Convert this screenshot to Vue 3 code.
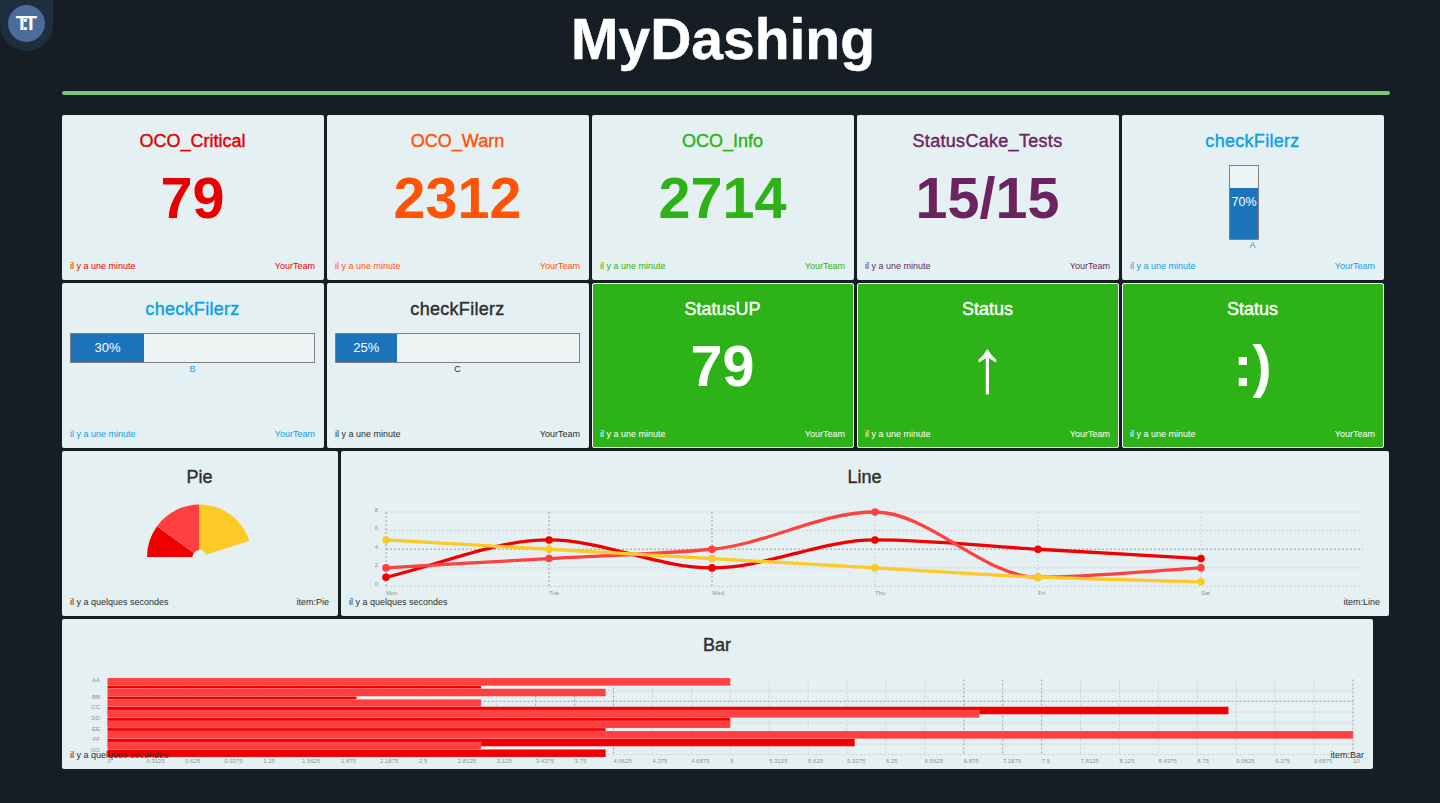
<template>
  <div class="page">
    <div class="logo"><span class="logo-mark">T:T</span></div>
    <h1 class="page-title">MyDashing</h1>
    <div class="rule"></div>

    <div class="row">
      <div v-for="w in numberRow" :key="w.title" class="widget" :style="{ color: w.color }">
        <h2 class="title" :class="{ wide: w.wide }">{{ w.title }}</h2>
        <div class="value">{{ w.value }}</div>
        <div class="foot"><span>il y a une minute</span><span>YourTeam</span></div>
      </div>
      <div class="widget blue">
        <h2 class="title wide">checkFilerz</h2>
        <div class="vgauge">
          <div class="vgauge-fill">70%</div>
        </div>
        <div class="vgauge-label">A</div>
        <div class="foot"><span>il y a une minute</span><span>YourTeam</span></div>
      </div>
    </div>

    <div class="row">
      <div v-for="g in gauges" :key="g.label" class="widget" :style="{ color: g.color }">
        <h2 class="title wide">checkFilerz</h2>
        <div class="hgauge">
          <div class="hgauge-fill" :style="{ width: g.pct + '%' }">{{ g.pct }}%</div>
        </div>
        <div class="hgauge-label">{{ g.label }}</div>
        <div class="foot"><span>il y a une minute</span><span>YourTeam</span></div>
      </div>
      <div v-for="s in statusRow" :key="s.value" class="widget status">
        <h2 class="title">{{ s.title }}</h2>
        <div class="value" :class="{ thin: s.thin }">{{ s.value }}</div>
        <div class="foot"><span>il y a une minute</span><span>YourTeam</span></div>
      </div>
    </div>

    <div class="row">
      <div class="widget pie-card">
        <h2 class="title">Pie</h2>
        <svg class="pie" width="120" height="64" viewBox="0 0 120 64">
          <path v-for="p in pieSlices" :key="p.color" :d="p.d" :fill="p.color" />
        </svg>
        <div class="foot"><span>il y a quelques secondes</span><span>item:Pie</span></div>
      </div>

      <div class="widget line-card">
        <h2 class="title">Line</h2>
        <svg class="line-chart" width="1048" height="100" viewBox="341 505 1048 100">
          <line v-for="g in lineGridY" :key="g.y" x1="386" x2="1363" :y1="g.y" :y2="g.y" class="grid" :class="{ strong: g.strong }" />
          <line v-for="d in lineDays" :key="d.name" :x1="d.x" :x2="d.x" y1="512" y2="587" class="grid" :class="{ strong: d.strong }" />
          <text v-for="g in lineGridY" :key="'t' + g.y" x="378" :y="g.y - 0.5" text-anchor="end" class="tick">{{ g.label }}</text>
          <text v-for="d in lineDays" :key="'d' + d.name" :x="d.x" y="595" class="tick">{{ d.name }}</text>
          <g v-for="s in lineSeries" :key="s.color">
            <path :d="s.d" fill="none" :stroke="s.color" stroke-width="3.3" />
            <circle v-for="(pt, i) in s.points" :key="i" :cx="pt.x" :cy="pt.y" r="3.8" :fill="s.color" />
          </g>
        </svg>
        <div class="foot"><span>il y a quelques secondes</span><span>item:Line</span></div>
      </div>
    </div>

    <div class="row">
      <div class="widget bar-card">
        <h2 class="title">Bar</h2>
        <svg class="bar-chart" width="1311" height="104" viewBox="62 666 1311 104">
          <line v-for="y in barGridY" :key="y.y" x1="107.5" x2="1353" :y1="y.y" :y2="y.y" class="grid" :class="{ strong: y.strong }" />
          <line v-for="t in barTicks" :key="t.label" :x1="t.x" :x2="t.x" y1="679.5" y2="755" class="grid" :class="{ strong: t.strong }" />
          <text v-for="t in barTicks" :key="'l' + t.label" :x="t.x" y="763" class="tick">{{ t.label }}</text>
          <text v-for="c in barCats" :key="c.name" x="100" :y="c.y" text-anchor="end" class="tick">{{ c.name }}</text>
          <rect v-for="s in barStrips" :key="s.y" :x="s.x" :y="s.y" :width="s.w" height="2.6" fill="#f3f5f5" />
          <rect v-for="b in bars" :key="b.y" x="107.5" :y="b.y" :width="b.w" :height="b.h" :fill="b.color" class="bar" />
        </svg>
        <div class="foot"><span>il y a quelques secondes</span><span>item:Bar</span></div>
      </div>
    </div>
  </div>
</template>

<script setup>
const numberRow = [
  { title: 'OCO_Critical', value: '79', color: '#e60000' },
  { title: 'OCO_Warn', value: '2312', color: '#ff5308' },
  { title: 'OCO_Info', value: '2714', color: '#2db318' },
  { title: 'StatusCake_Tests', value: '15/15', color: '#6b2460', wide: true },
]

const gauges = [
  { label: 'B', pct: 30, color: '#0e9fe6' },
  { label: 'C', pct: 25, color: '#2e2e2e' },
]

const statusRow = [
  { title: 'StatusUP', value: '79' },
  { title: 'Status', value: '↑', thin: true },
  { title: 'Status', value: ':)' },
]

// pie: half doughnut, 18 degrees per unit
const pieCx = 59.5
const pieCy = 58
function polar(r, deg) {
  const a = (deg * Math.PI) / 180
  return [pieCx - r * Math.cos(a), pieCy - r * Math.sin(a)]
}
function slice(from, to) {
  const [x1, y1] = polar(52.5, from)
  const [x2, y2] = polar(52.5, to)
  const [x3, y3] = polar(7, to)
  const [x4, y4] = polar(7, from)
  return `M${x1} ${y1}A52.5 52.5 0 0 1 ${x2} ${y2}L${x3} ${y3}A7 7 0 0 0 ${x4} ${y4}Z`
}
const pieSlices = [
  { color: '#f00000', d: slice(0, 36) },
  { color: '#ff4040', d: slice(36, 90) },
  { color: '#fdc926', d: slice(90, 162) },
]

// line chart
const yFor = (v) => 586.5 - v * 9.31
const lineGridY = [
  { y: 512, label: 8 },
  { y: 530.6, label: 6 },
  { y: 549.2, label: 4, strong: true },
  { y: 567.9, label: 2 },
  { y: 586.5, label: 0 },
]
const lineDays = ['Mon', 'Tue', 'Wed', 'Thu', 'Fri', 'Sat'].map((name, i) => ({
  name,
  x: 386 + i * 163,
  strong: i < 3,
}))

// monotone cubic so the curve stays flat at the peaks
function monotonePath(pts) {
  const n = pts.length
  const d = []
  const m = []
  for (let i = 0; i < n - 1; i++) d.push((pts[i + 1].y - pts[i].y) / (pts[i + 1].x - pts[i].x))
  m.push(d[0])
  for (let i = 1; i < n - 1; i++) {
    m.push(d[i - 1] * d[i] <= 0 ? 0 : (2 * d[i - 1] * d[i]) / (d[i - 1] + d[i]))
  }
  m.push(d[n - 2])
  let path = `M${pts[0].x} ${pts[0].y}`
  for (let i = 0; i < n - 1; i++) {
    const h = (pts[i + 1].x - pts[i].x) / 3
    path += `C${pts[i].x + h} ${pts[i].y + m[i] * h} ${pts[i + 1].x - h} ${pts[i + 1].y - m[i + 1] * h} ${pts[i + 1].x} ${pts[i + 1].y}`
  }
  return path
}
const lineSeries = [
  { color: '#f00000', data: [1, 5, 2, 5, 4, 3] },
  { color: '#ff4040', data: [2, 3, 4, 8, 1, 2] },
  { color: '#fdc926', data: [5, 4, 3, 2, 1, 0.5] },
].map((s) => {
  const points = s.data.map((v, i) => ({ x: 386 + i * 163, y: yFor(v) }))
  return { color: s.color, points, d: monotonePath(points) }
})

// bar chart
const unit = 124.55
const barGridY = [
  { y: 690.7 },
  { y: 701.3, strong: true },
  { y: 712 },
  { y: 722.7 },
  { y: 733 },
  { y: 744 },
  { y: 754.5 },
]
const tickLabels = [
  '0', '0.3125', '0.625', '0.9375', '1.25', '1.5625', '1.875', '2.1875', '2.5', '2.8125', '3.125',
  '3.4375', '3.75', '4.0625', '4.375', '4.6875', '5', '5.3125', '5.625', '5.9375', '6.25', '6.5625',
  '6.875', '7.1875', '7.5', '7.8125', '8.125', '8.4375', '8.75', '9.0625', '9.375', '9.6875', '10',
]
const strongTicks = ['3.4375', '3.75', '4.0625', '6.875', '7.1875', '7.5', '10']
const barTicks = tickLabels.map((label) => ({
  label,
  x: 107.5 + parseFloat(label) * unit,
  strong: strongTicks.includes(label),
}))
const barCats = [
  { name: 'AA', y: 682 },
  { name: 'BB', y: 698.5 },
  { name: 'CC', y: 709 },
  { name: 'DD', y: 720 },
  { name: 'EE', y: 730.5 },
  { name: 'FF', y: 741 },
  { name: 'GG', y: 751.5 },
]
const DARK = '#f00000'
const LIGHT = '#ff4040'
const bars = [
  { y: 685.7, h: 3, v: 3, color: DARK },
  { y: 696.3, h: 3, v: 2, color: DARK },
  { y: 706.7, h: 7.6, v: 9, color: DARK },
  { y: 717.7, h: 8, v: 5, color: DARK },
  { y: 728, h: 3, v: 4, color: DARK },
  { y: 738.7, h: 7.6, v: 6, color: DARK },
  { y: 749.4, h: 7.6, v: 4, color: DARK },
  { y: 678, h: 7.7, v: 5, color: LIGHT },
  { y: 688.7, h: 7.6, v: 4, color: LIGHT },
  { y: 699.3, h: 7.4, v: 3, color: LIGHT },
  { y: 710, h: 7.7, v: 7, color: LIGHT },
  { y: 720.7, h: 7.3, v: 5, color: LIGHT },
  { y: 731, h: 7.7, v: 10, color: LIGHT },
  { y: 742, h: 7.4, v: 3, color: LIGHT },
].map((b) => ({ ...b, w: b.v * unit }))
const barStrips = [
  { x: 481, y: 686, w: 125 },
  { x: 356, y: 696.6, w: 125 },
  { x: 481, y: 746.7, w: 125 },
]
</script>

<style scoped>
.page {
  position: relative;
  min-height: 803px;
  box-sizing: border-box;
  padding: 0 0 0 62px;
  background: #161d24;
  font-family: "Liberation Sans", Arial, sans-serif;
}
.logo {
  position: absolute;
  left: 0;
  top: 0;
  width: 53px;
  height: 51px;
  background: #1c2e3f;
  border-radius: 0 0 26px 26px;
}
.logo-mark {
  display: block;
  width: 37px;
  height: 37px;
  margin: 5px 0 0 8px;
  border-radius: 50%;
  background: #4a6d9b;
  color: #fff;
  font-size: 20px;
  font-weight: 700;
  line-height: 37px;
  letter-spacing: -3.8px;
  text-align: center;
  text-indent: -4px;
}
.page-title {
  width: 1322px;
  margin: 0;
  height: 91px;
  box-sizing: border-box;
  padding-top: 6px;
  color: #fff;
  font-size: 57px;
  line-height: 66px;
  font-weight: 700;
  text-align: center;
  -webkit-text-stroke: 0.5px #fff;
}
.rule {
  width: 1328px;
  height: 4px;
  margin-bottom: 20px;
  border-radius: 2px;
  background: #7dc672;
}
.row {
  display: flex;
  gap: 3px;
  margin-bottom: 3px;
}
.widget {
  position: relative;
  box-sizing: border-box;
  width: 262px;
  height: 165px;
  padding: 14px 9px 0 8px;
  border-radius: 2px;
  background: #e5f0f2;
  color: #2e2e2e;
  text-align: center;
  overflow: hidden;
}
.title {
  margin: 0;
  font-size: 18px;
  line-height: 24px;
  font-weight: 400;
  -webkit-text-stroke: 0.4px currentColor;
}
.title.wide {
  letter-spacing: 0.3px;
}
.value {
  margin-top: 11px;
  font-size: 57.5px;
  line-height: 68px;
  font-weight: 700;
}
.value.thin {
  font-size: 75px;
  font-weight: 400;
}
.foot {
  position: absolute;
  left: 8px;
  right: 9px;
  bottom: 8px;
  display: flex;
  justify-content: space-between;
  font-size: 9px;
  line-height: 12px;
}
.blue {
  color: #0e9fe6;
}
.status {
  background: #2db318;
  border: 1px solid #fff;
  color: #fff;
  padding: 13px 8px 0 7px;
}
.status .foot {
  left: 7px;
  right: 8px;
  bottom: 7px;
}
.vgauge {
  box-sizing: border-box;
  width: 30px;
  height: 75px;
  margin: 12px 0 0 99px;
  display: flex;
  flex-direction: column;
  justify-content: flex-end;
  border: 1px solid #7f7f7f;
  background: #edf2f2;
}
.vgauge-fill {
  height: 70%;
  background: #1c75bc;
  color: #fff;
  font-size: 12.5px;
  line-height: 29px;
}
.vgauge-label {
  font-size: 9px;
  line-height: 11px;
}
.hgauge {
  box-sizing: border-box;
  height: 30px;
  margin-top: 12px;
  border: 1px solid #7f7f7f;
  background: #edf2f2;
}
.hgauge-fill {
  height: 100%;
  background: #1c75bc;
  color: #fff;
  font-size: 13px;
  line-height: 28px;
}
.hgauge-label {
  margin-top: 1px;
  font-size: 9px;
  line-height: 11px;
}
.pie-card {
  width: 276px;
}
.pie {
  display: block;
  margin: 10px auto 0;
}
.line-card {
  width: 1048px;
}
.line-chart,
.bar-chart {
  position: absolute;
  left: 0;
  display: block;
}
.line-chart {
  top: 54px;
}
.bar-card {
  width: 1311px;
  height: 150px;
}
.bar-chart {
  top: 47px;
}
.grid {
  stroke: #c9d0d2;
  stroke-width: 1;
  stroke-dasharray: 2 2;
}
.grid.strong {
  stroke: #9a9fa1;
}
.tick {
  fill: #8f9496;
  font-size: 6px;
}
.bar {
  stroke: rgba(255, 255, 255, 0.18);
  stroke-width: 0.6;
}
</style>

<style>
html,
body {
  background: #161d24;
}
</style>
